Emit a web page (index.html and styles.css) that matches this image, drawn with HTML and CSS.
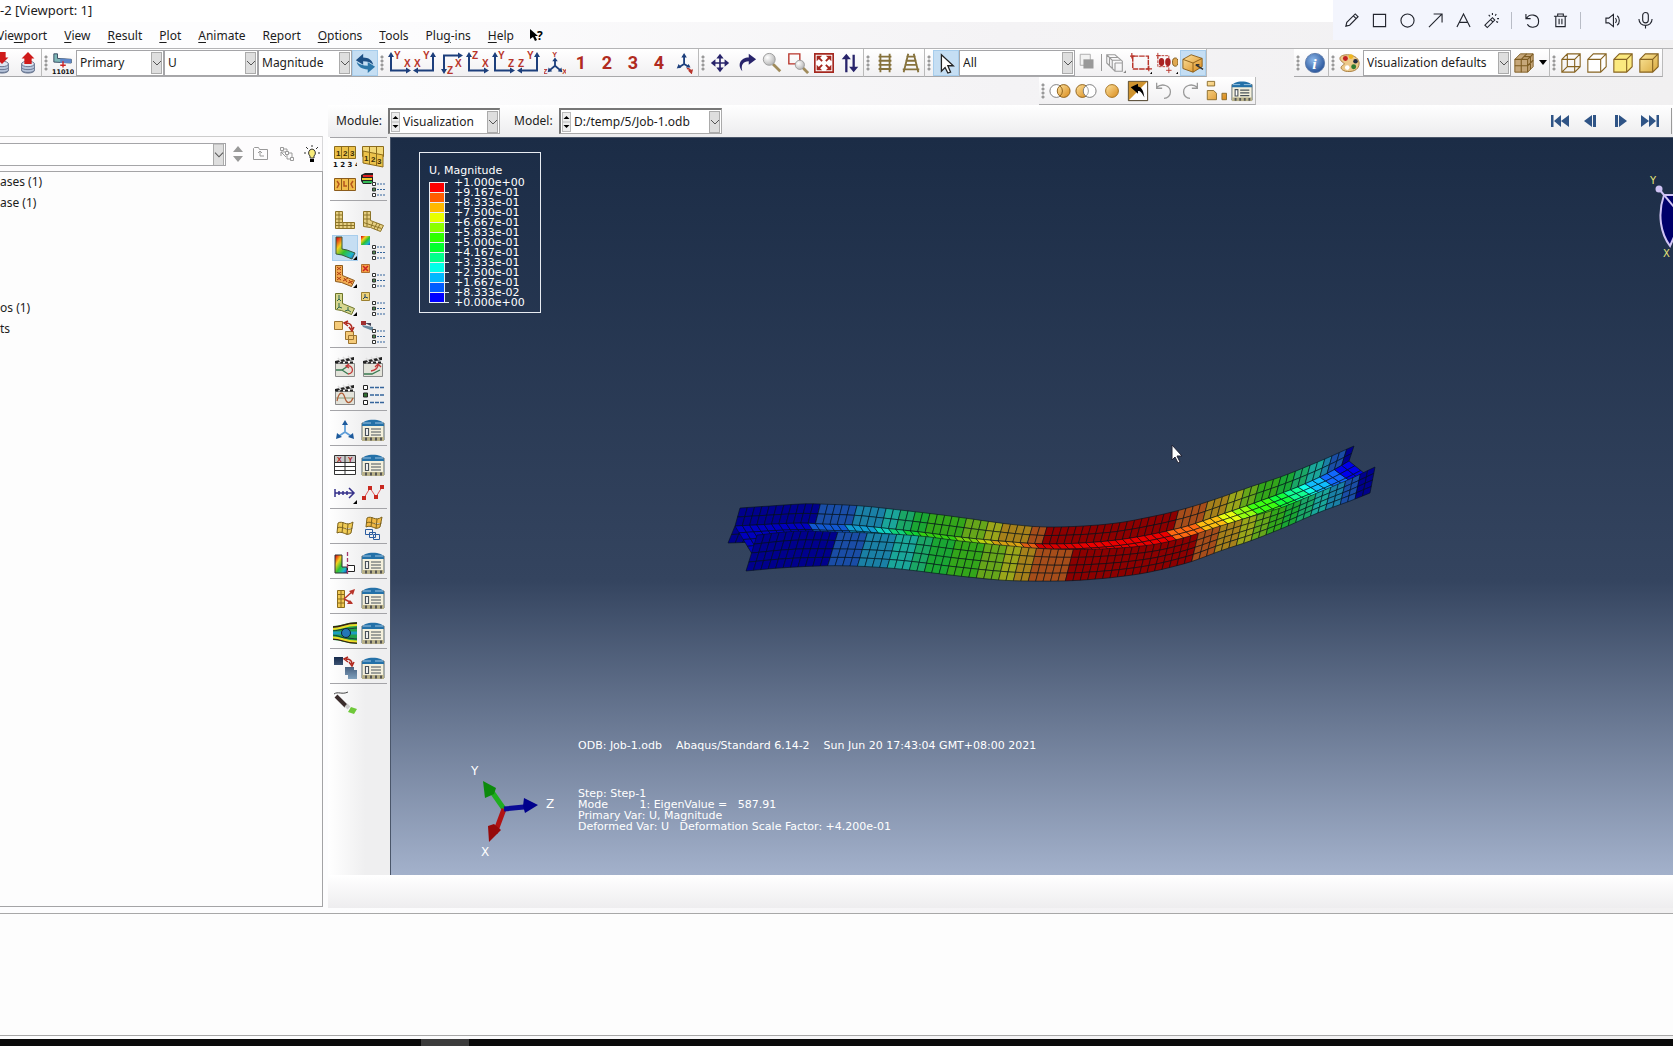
FILE: index.html
```html
<!DOCTYPE html>
<html lang="en">
<head>
<meta charset="utf-8">
<title>Abaqus/CAE 6.14-2 [Viewport: 1]</title>
<link rel="stylesheet" href="styles.css">
</head>
<body>
<svg class="defs" aria-hidden="true">
<defs>
<linearGradient id="gold" x1="0" y1="0" x2="1" y2="1"><stop offset="0" stop-color="#fde3a0"/><stop offset="1" stop-color="#d98a1a"/></linearGradient>
<linearGradient id="sand" x1="0" y1="0" x2="1" y2="1"><stop offset="0" stop-color="#fbe79b"/><stop offset="1" stop-color="#d9a93f"/></linearGradient>
<linearGradient id="rain" x1="0" y1="0" x2="1" y2="1"><stop offset="0.05" stop-color="#e01010"/><stop offset="0.3" stop-color="#f5d020"/><stop offset="0.55" stop-color="#30c030"/><stop offset="0.8" stop-color="#20b8c8"/><stop offset="1" stop-color="#1840d0"/></linearGradient>
<linearGradient id="navy" x1="0" y1="0" x2="0" y2="1"><stop offset="0" stop-color="#16294a"/><stop offset="1" stop-color="#7fa0bd"/></linearGradient>
<radialGradient id="blueball" cx="0.4" cy="0.35" r="0.7"><stop offset="0" stop-color="#8db8ea"/><stop offset="1" stop-color="#234f96"/></radialGradient>
<radialGradient id="lens" cx="0.35" cy="0.35" r="0.7"><stop offset="0" stop-color="#fff"/><stop offset="1" stop-color="#b5b5b5"/></radialGradient>
</defs>
</svg>
<svg class="symbols" aria-hidden="true">
<symbol id="db" viewBox="0 0 24 24"><path d="M5 13v7c0 4 14 4 14 0v-7z" fill="#b9c6dc" stroke="#62718c"/><ellipse cx="12" cy="13" rx="7" ry="3" fill="#dfe6f2" stroke="#62718c"/><path d="M5 17c1 3 13 3 14 0M5 20c1 3 13 3 14 0" fill="none" stroke="#62718c"/></symbol>
<symbol id="db-up" viewBox="0 0 24 24"><use href="#db"/><path d="M12 0l7 7h-3v6h-8v-6h-3z" fill="#cf1b1b"/></symbol>
<symbol id="db-down" viewBox="0 0 24 24"><use href="#db"/><path d="M8 0h8v6h3l-7 7l-7-7h3z" fill="#cf1b1b"/></symbol>
<symbol id="frame" viewBox="0 0 24 24"><path d="M2 2h4v5l15 1v4l-19-1z" fill="#7fb7b7" stroke="#33475e"/><path d="M9 7l12 1v4h-12z" fill="#5d86c8"/><path d="M12 10v7M9 14.500h6" stroke="#c22" stroke-width="1.500"/><text x="0" y="24" class="tiny">11010</text></symbol>
<symbol id="sync" viewBox="0 0 24 24"><path d="M2 9l8-7v4c6 0 10 3 11 8c-3-3-6-4-11-4v4z" fill="#1d4f84"/><path d="M23 16l-8 7v-4c-6 0-11-3-12-8c3 3 7 4 12 4v-4z" fill="#2c76a8"/></symbol>
<symbol id="ax-l" viewBox="0 0 24 24"><path d="M4 4V19.500H21" class="axis"/><path d="M4 1l3 5h-6zM24 19.500l-5-3v6z" class="axh"/></symbol>
<symbol id="ax-r" viewBox="0 0 24 24"><path d="M20 4V19.500H3" class="axis"/><path d="M20 1l3 5h-6zM0 19.500l5-3v6z" class="axh"/></symbol>
<symbol id="ax-d" viewBox="0 0 24 24"><path d="M5 20V4.500H20" class="axis"/><path d="M5 23l3-5h-6zM24 4.500l-5-3v6z" class="axh"/></symbol>
<symbol id="triad" viewBox="0 0 24 24"><path d="M12 8v7l-6 5M12 15l6 5" class="axis"/><path d="M12 6l3 4h-6zM4 22l1-5l4 4zM20 22l-1-5l-4 4z" class="axh"/><text x="9" y="5" class="axt s">Y</text><text x="-1" y="24" class="axt s">Z</text><text x="20" y="24" class="axt s">X</text></symbol>
<symbol id="csys" viewBox="0 0 24 24"><path d="M11 4v9l-6 4M11 13l5 3" class="axis"/><path d="M11 1l3 5h-6zM3 18l2-5l3 4zM18 17l-5 0l3-4z" class="axh"/><path d="M14 18c3 0 4 1 5 4M16 20l3 3l1-4" fill="none" stroke="#b8352b" stroke-width="1.500"/></symbol>
<symbol id="move" viewBox="0 0 24 24"><path d="M12 5v14M5 12h14" stroke="#28246b" stroke-width="1.800"/><path d="M12 2l4 5h-8zM12 22l4-5h-8zM2 12l5-4v8zM22 12l-5-4v8z" fill="#28246b"/></symbol>
<symbol id="rotate" viewBox="0 0 24 24"><path d="M8 21c-6-7-2-15 7-15v-4l8 6l-8 6v-4c-6 0-9 4-7 11z" fill="#28246b"/></symbol>
<symbol id="mag" viewBox="0 0 24 24"><path d="M13 13l8 8" stroke="#a08b5b" stroke-width="3"/><circle cx="9" cy="8" r="6.500" fill="url(#lens)" stroke="#999"/></symbol>
<symbol id="magbox" viewBox="0 0 24 24"><path d="M2 2h12v11h-12z" fill="none" stroke="#b8352b" stroke-width="1.500"/><path d="M17 17l6 6" stroke="#a08b5b" stroke-width="3"/><circle cx="14" cy="14" r="5" fill="url(#lens)" stroke="#999"/></symbol>
<symbol id="fit" viewBox="0 0 24 24"><path d="M2 2h20v20h-20z" fill="#fff" stroke="#a5281f" stroke-width="1.800"/><path d="M10 10l-4-4M14 10l4-4M10 14l-4 4M14 14l4 4" stroke="#a5281f" stroke-width="2"/><path d="M4 4h6l-6 6zM20 4v6l-6-6zM4 20v-6l6 6zM20 20h-6l6-6z" fill="#a5281f"/></symbol>
<symbol id="updown" viewBox="0 0 24 24"><path d="M8 6v16M16 3v15" stroke="#28246b" stroke-width="2.500"/><path d="M8 2l5 6h-10zM16 22l5-6h-10z" fill="#28246b"/></symbol>
<symbol id="ladder" viewBox="0 0 24 24"><path d="M7 2v20M17 2v20M5 5h14M5 9.500h14M5 14h14M5 18.500h14" class="lad"/></symbol>
<symbol id="ladder2" viewBox="0 0 24 24"><path d="M9 2L4 22M15 2l5 20M7 5h10M6 9.500h12M5 14h14M3 19h18" class="lad"/></symbol>
<symbol id="pointer" viewBox="0 0 24 24"><path d="M7 3v18l4-4l3 6l3-1l-3-7h6z" fill="#fff" stroke="#222" stroke-width="1.400"/></symbol>
<symbol id="greysq" viewBox="0 0 24 24"><path d="M3.500 2.500h11v12h-11z" fill="#f2f2f2" stroke="#aaa"/><path d="M7 8h11v10h-11z" fill="#999"/></symbol>
<symbol id="greycubes" viewBox="0 0 24 24"><path d="M3 3h9l8 7v11h-8l-9-9zM3 3l6 6v9M6 6h9M9 9h9M12 12h8M12 12v9M6 6v9M3 8" fill="none" stroke="#9b9b9b" stroke-width="1.200"/><path d="M24 20v3h-3z" fill="#888"/></symbol>
<symbol id="rectsel" viewBox="0 0 24 24"><path d="M3 4.500h17v14h-17z" fill="none" stroke="#b8352b" stroke-width="1.600" stroke-dasharray="6 1"/><path d="M-1 4.500h6M2 1v6M18 18.500h6M20.500 15v6" stroke="#b8352b" stroke-width="1.300"/><path d="M25 20v5h-4z"/></symbol>
<symbol id="dragsel" viewBox="0 0 24 24"><path d="M2 4h12v12h-12z" fill="none" stroke="#b8352b" stroke-dasharray="3 1"/><path d="M-1 4h6M2 1v6M11 20h6M14 17v6" stroke="#b8352b"/><ellipse cx="6" cy="11" rx="3" ry="4.500" fill="#a22"/><ellipse cx="13" cy="11" rx="3" ry="4.500" fill="#a22"/><ellipse cx="21" cy="11" rx="3" ry="4.500" fill="#e0a850" stroke="#7a5518"/><path d="M25 20v5h-4z"/></symbol>
<symbol id="box3d" viewBox="0 0 24 24"><path d="M1 8l9-5l12 4v9l-10 6l-11-4z" fill="url(#gold)" stroke="#8a5c16"/><path d="M1 8l11 4l10-5M12 12v10" fill="none" stroke="#8a5c16"/><path d="M15 14l8 5M15 14l4 0" stroke="#333" stroke-width="1.600"/></symbol>
<symbol id="union" viewBox="0 0 24 24"><circle cx="8" cy="12" r="7" fill="#fff" stroke="#777"/><circle cx="16" cy="12" r="7" fill="url(#gold)" stroke="#8a5c16"/><path d="M12 6.500a7 7 0 0 1 0 11" fill="none" stroke="#8a5c16"/></symbol>
<symbol id="diff" viewBox="0 0 24 24"><circle cx="8" cy="12" r="7" fill="url(#gold)" stroke="#8a5c16"/><circle cx="16" cy="12" r="7" fill="#fff" stroke="#777"/><path d="M12 6.500a7 7 0 0 1 0 11" fill="none" stroke="#999"/></symbol>
<symbol id="ball" viewBox="0 0 24 24"><circle cx="12" cy="12" r="7" fill="url(#gold)" stroke="#a06c1a"/></symbol>
<symbol id="invert" viewBox="0 0 24 24"><path d="M1.500 1.500h21v21h-21z" fill="#fff" stroke="#3b2c12"/><path d="M2 22V2h20z" fill="#cf942f"/><path d="M4 8l8-4v3c5 1 6 6 7 12c-3-5-4-7-7-7v3z"/></symbol>
<symbol id="undo" viewBox="0 0 24 24"><path d="M4 8c6-5 15-2 15 5c0 4-3 7-7 7M4 3v6h6" fill="none" stroke="#999" stroke-width="1.400"/></symbol>
<symbol id="redo" viewBox="0 0 24 24"><path d="M20 8c-6-5-15-2-15 5c0 4 3 7 7 7M20 3v6h-6" fill="none" stroke="#999" stroke-width="1.400"/></symbol>
<symbol id="shapes" viewBox="0 0 24 24"><path d="M2.500 1.500h8v5h-8zM2.500 11.500h7l3 3v7h-10zM18.500 14.500h5v7h-5z" fill="url(#gold)" stroke="#8a6a2a"/></symbol>
<symbol id="table" viewBox="0 0 24 24"><path d="M1 5h22v17h-22z" fill="#f4f0dc" stroke="#5d6a6e"/><path d="M1 7c0-7 22-7 22 0v1h-22z" fill="#2471a8"/><path d="M2 5h8M14 5h8" stroke="#9cc4e2"/><path d="M4.500 10.500h3v7h-3zM10 11h10M10 14h10M10 17h10" stroke="#49525a" stroke-width="1.200" fill="#fff"/><path d="M1 19h22v4h-22z" fill="#b9b28a"/><path d="M5 19.500v3M10 19.500v3M15 19.500v3M20 19.500v3" stroke="#555" stroke-width="2"/></symbol>
<symbol id="info" viewBox="0 0 24 24"><circle cx="12" cy="12" r="10.500" fill="url(#blueball)" stroke="#5c7aa8"/><text x="9" y="18" class="infot">i</text></symbol>
<symbol id="palette" viewBox="0 0 24 24"><path d="M1 7c0-6 20-6 21 5c0 9-9 10-15 9c-6-2-6-5-2-7c3-2-4-3-4-7z" fill="#ecc98a" stroke="#a5793a"/><circle cx="7" cy="7" r="2.700" fill="#c22020"/><circle cx="13" cy="5" r="2.500" fill="#f0b820"/><circle cx="18" cy="10" r="2.500" fill="#202a40"/><circle cx="16" cy="16" r="2.700" fill="#2f7a30"/><circle cx="9" cy="17" r="2.500" fill="#fff"/></symbol>
<symbol id="cube-mesh" viewBox="0 0 24 24"><path d="M2 8l6-6h14v14l-6 6h-14z" fill="#c6a77a" stroke="#7d5c22"/><path d="M2 8h14v14M16 8l6-6M9 8v14M2 15h14M12 5h8M15 2l-6 6M16 15l6-6M19 5v14" fill="none" stroke="#7d5c22" stroke-width="1.200"/></symbol>
<symbol id="cube-wire" viewBox="0 0 24 24"><path d="M2 8l6-6h14v14l-6 6h-14zM2 8h14v14M16 8l6-6M8 2v14h14M8 16l-6 6" fill="none" stroke="#866321" stroke-width="1.200"/></symbol>
<symbol id="cube-hid" viewBox="0 0 24 24"><path d="M2 8l6-6h14v14l-6 6h-14zM2 8h14v14M16 8l6-6" fill="#fff" stroke="#866321" stroke-width="1.200"/></symbol>
<symbol id="cube-fill" viewBox="0 0 24 24"><path d="M2 8l6-6h14v14l-6 6h-14zM2 8h14v14M16 8l6-6" fill="#fbe97f" stroke="#866321" stroke-width="1.200"/></symbol>
<symbol id="cube-shade" viewBox="0 0 24 24"><path d="M2 8l6-6h14v14l-6 6h-14zM2 8h14v14M16 8l6-6" fill="url(#sand)" stroke="#866321" stroke-width="1.200"/></symbol>

<symbol id="opts" viewBox="0 0 24 24"><path d="M11.500 9.500h3v3h-3zM11.500 20.500h3v3h-3z" fill="#fff" stroke="#333"/><path d="M11.500 15h3v3h-3z" fill="#4f8a4f" stroke="#333"/><path d="M16 11h8M16 16.500h8M16 22h8" stroke="#35659c" stroke-width="1.200" stroke-dasharray="2 1"/></symbol>
<symbol id="num" viewBox="0 0 24 24"><path d="M1.500 1.500h21v12h-21zM8.500 1.500v12M15.500 1.500v12" fill="#ecc24a" stroke="#8c6c1c"/><text x="3" y="11" class="numt">1</text><text x="10" y="11" class="numt">2</text><text x="17" y="11" class="numt">3</text><text x="0" y="22" class="tiny">1 2 3 4</text></symbol>
<symbol id="num2" viewBox="0 0 24 24"><path d="M1.500 1.500h21v10h-21zM8.500 1.500v10M15.500 1.500v10" fill="#f2d878" stroke="#8c6c1c"/><path d="M2 6l20 4v12l-20-4z" fill="#ecc24a" stroke="#8c6c1c"/><path d="M8.500 7v12M15.500 9v12" stroke="#8c6c1c"/><text x="3" y="16" class="numt">1</text><text x="10" y="17" class="numt">2</text><text x="16" y="19" class="numt">3</text></symbol>
<symbol id="cs" viewBox="0 0 24 24"><path d="M1.500 5.500h21v12h-21zM8.500 5.500v12M15.500 5.500v12" fill="#f0bc4a" stroke="#8c5c1c"/><path d="M4 8l2 3l-2 4M11 8v5h3M20 8l-2 3l2 4" fill="none" stroke="#b5541c" stroke-width="1.500"/></symbol>
<symbol id="stack" viewBox="0 0 24 24"><path d="M0 2l4-2h8v9l-2 2h-8l-2-3z" fill="#222"/><path d="M2 3h10" stroke="#d22" stroke-width="2"/><path d="M1 6h10" stroke="#ec3" stroke-width="2"/><path d="M2 9h9" stroke="#3b5" stroke-width="2"/><use href="#opts"/></symbol>
<symbol id="mesh-l" viewBox="0 0 24 24"><path d="M2.500 3.500h7v11h12v6h-19zM6 3.500v17M2.500 7h7M2.500 11h7M2.500 14.500h7M2.500 17.500h19M10 14.500v6M14 14.500v6M18 14.500v6" fill="#e6cf82" stroke="#8c7428"/></symbol>
<symbol id="mesh-b" viewBox="0 0 24 24"><path d="M2.500 3.500h7v9l13 5l-3 6l-10-4l-7-1zM6 3.500v15M2.500 7h7M2.500 11h7M2.500 14.500l18 6M12 14l-2 5M16 15l-3 6M19 16l-3 6" fill="#e6cf82" stroke="#8c7428"/></symbol>
<symbol id="cont-l" viewBox="0 0 24 24"><path d="M3 1h6v12l5 1l8 3l-3 6l-10-4l-6-1z" fill="url(#rain)" stroke="#3a5a3a"/><path d="M25 19v5h-5z"/></symbol>
<symbol id="cont-o" viewBox="0 0 24 24"><path d="M0 0h9v9h-9z" fill="url(#rain)"/><use href="#opts"/></symbol>
<symbol id="x-l" viewBox="0 0 24 24"><path d="M2.500 1.500h7v10l12 5l-3 6l-10-4l-6-1z" fill="#f2ae54" stroke="#8c5a1c"/><path d="M4 3l4 3M8 3l-4 3M4 8l4 3M8 8l-4 3M4 13l4 3M8 13l-4 3M11 14l3 4M15 14l-5 3M16 16l3 4M20 17l-5 2" stroke="#b03a10"/><path d="M24 20v4h-4z"/></symbol>
<symbol id="x-o" viewBox="0 0 24 24"><path d="M.5.5h8v8h-8z" fill="#f2a044" stroke="#b07030"/><path d="M2 2l5 5M7 2l-5 5" stroke="#c22" stroke-width="1.500"/><use href="#opts"/></symbol>
<symbol id="a-l" viewBox="0 0 24 24"><path d="M2.500 1.500h7v10l12 5l-3 6l-10-4l-6-1z" fill="#d6d68e" stroke="#6c7428"/><path d="M6 3v4l-2 2M6 7l2 2M6 11v4l-2 2M6 15l3 1M15 15v3l-3 1M15 18l3 2" stroke="#306a50" fill="none"/><path d="M24 20v4h-4z"/></symbol>
<symbol id="a-o" viewBox="0 0 24 24"><path d="M.5.5h8v8h-8z" fill="#ecd27a" stroke="#9c8030"/><path d="M4 2v3l-2 2M4 5l3 1" stroke="#246" fill="none"/><use href="#opts"/></symbol>
<symbol id="swap" viewBox="0 0 24 24"><path d="M1.500 1.500h8v8h-8zM12.500 11.500h8v8h-8zM15.500 15.500h8v8h-8z" fill="#f5cb7a" stroke="#9c7430"/><path d="M13 3c4 0 6 2 6 6M15 1l-4 2l4 3M16 7l3 4l2-4" fill="none" stroke="#b02a20" stroke-width="1.500"/></symbol>
<symbol id="swap-o" viewBox="0 0 24 24"><path d="M0 1h5v4h-5z" fill="#a23030"/><path d="M1 5l11 2v4l-10-4z" fill="#6a8ba0"/><path d="M4 3l6 3v-3z" fill="#445"/><use href="#opts"/></symbol>
<symbol id="film" viewBox="0 0 24 24"><path d="M2.500 8.500h19v13h-19z" fill="#e3e3da" stroke="#888"/><path d="M2 6l19-4v3l-19 3z" fill="#222"/><path d="M2 7.500h20" stroke="#222" stroke-width="2" stroke-dasharray="3 2"/><path d="M5 3l3 4M10 2l3 4M15 1l3 4" stroke="#ddd" stroke-width="1.500"/></symbol>
<symbol id="film1" viewBox="0 0 24 24"><use href="#film"/><path d="M3 15h6l6-4M9 15l6 4" stroke="#397a52" fill="none" stroke-width="1.300"/><path d="M14 11c6-2 8 8 1 8M16 9l-3 2l3 2" stroke="#c23a3a" fill="none" stroke-width="1.300"/></symbol>
<symbol id="film2" viewBox="0 0 24 24"><use href="#film"/><path d="M3 19h8l8-4" stroke="#397a52" fill="none" stroke-width="1.300"/><path d="M10 16c5-1 7-3 7-6M14 12l3-3l3 3" stroke="#c23a3a" fill="none" stroke-width="1.300"/></symbol>
<symbol id="film3" viewBox="0 0 24 24"><use href="#film"/><path d="M3 15h18" stroke="#8a9a7a"/><path d="M4 18c2-10 6-10 8-3s6 5 8 0" stroke="#b0603a" fill="none" stroke-width="1.300"/></symbol>
<symbol id="list" viewBox="0 0 24 24"><path d="M2.500 2.500h4v4h-4zM2.500 17.500h4v4h-4z" fill="#fff" stroke="#222"/><path d="M2.500 10h4v4h-4z" fill="#2f7030" stroke="#222"/><path d="M9 4.500h14M9 12h14M9 19.500h14" stroke="#35659c" stroke-width="1.500" stroke-dasharray="4 1"/></symbol>
<symbol id="triad-b" viewBox="0 0 24 24"><path d="M12 6v8l-6 4M12 14l6 4" stroke="#5f9ed8" stroke-width="1.700" fill="none"/><path d="M12 2l3 5h-6zM3 21l1-6l5 4zM21 21l-1-6l-5 4z" fill="#1d5a9c"/></symbol>
<symbol id="xy" viewBox="0 0 24 24"><path d="M1.500 2.500h21v19h-21z" fill="#fff" stroke="#333"/><path d="M2 3h20v6h-20z" fill="#c9c9c9"/><path d="M1.500 9.500h21M1.500 13.500h21M1.500 17.500h21M12 2.500v19" stroke="#333"/><text x="4" y="9" class="xyt">X</text><text x="15" y="9" class="xyt">Y</text></symbol>
<symbol id="path" viewBox="0 0 24 24"><path d="M2 8v8M2 12h19M6 10v4M10 10v4M14 10v4M16 7l5 5l-5 5" stroke="#35308a" stroke-width="1.500" fill="none"/><path d="M24 19v4h-4z"/></symbol>
<symbol id="zig" viewBox="0 0 24 24"><path d="M3 17l6-10l6 9l6-10" stroke="#e05a5a" fill="none"/><path d="M1 15h4v4h-4zM7 5h4v4h-4zM13 14h4v4h-4zM19 4h4v4h-4z" fill="#c8281f"/></symbol>
<symbol id="wave" viewBox="0 0 24 24"><path d="M5 7c5-3 8 4 15-1l-2 11c-5 4-8-3-14 0zM4.500 12c5-3 9 4 15 0M10 6l-1 11M15 8l-1 11" fill="#f0cb55" stroke="#7c621c"/></symbol>
<symbol id="waves" viewBox="0 0 24 24"><path d="M6 2c5-3 8 4 15-1l-2 10c-5 4-8-3-14 0zM5.500 7c5-3 9 4 15 0M11 1l-1 10M16 3l-1 10" fill="#f0b845" stroke="#7c621c"/><path d="M4.500 13.500h7v5h-7zM8.500 16.500h6v5h-6zM12.500 18.500h6v5h-6z" fill="none" stroke="#2a5ca0"/></symbol>
<symbol id="cut" viewBox="0 0 24 24"><path d="M2 4h7v12h5v6h-12z" fill="url(#rain)" stroke="#333"/><path d="M14.500 14.500h7v6h-7z" fill="#fff" stroke="#222"/><path d="M14.500 1v22" stroke="#a33a6a" stroke-dasharray="4 2" stroke-width="1.300"/></symbol>
<symbol id="free" viewBox="0 0 24 24"><path d="M4.500 4.500h7v17h-7zM8 4.500v17M4.500 8.500h7M4.500 13h7M4.500 17h7" fill="#f2ca55" stroke="#8c6c1c"/><path d="M11 13l9-8M11 13l8 4" stroke="#b8352b" stroke-width="1.500"/><path d="M22 3l-2 6l-4-4zM20 18l-6 0l3-4z" fill="#b8352b"/></symbol>
<symbol id="stream" viewBox="0 0 24 24"><path d="M0 5c8 0 10-3 24-4v22c-14-1-16-4-24-4z" fill="#23a04a"/><path d="M0 6c10 0 11-4 24-4M0 18c10 0 11 4 24 4" stroke="#3c1c10" fill="none" stroke-width="1.500"/><path d="M0 8c10 0 10-4 24-4M0 16.500c10 0 10 4 24 4" stroke="#ecdc28" fill="none" stroke-width="2"/><path d="M0 10c7-1 9-2 13-2s8-1 11-1M0 14c7 1 9 3 13 3s8 1 11 1" stroke="#123" fill="none" stroke-width=".8"/><path d="M0 12h24" stroke="#1c9cc0" stroke-width="3"/><circle cx="13" cy="12" r="4.500" fill="#2277b8" stroke="#123"/></symbol>
<symbol id="over" viewBox="0 0 24 24"><path d="M1 1h9v8h-9zM12 11h9v8h-9zM15 14h9v9h-9z" fill="url(#navy)"/><path d="M13 3c4 0 6 2 6 5M15 1l-4 2l4 3M16 6l3 4l2-4" fill="none" stroke="#b02a20" stroke-width="1.500"/></symbol>
<symbol id="brush" viewBox="0 0 24 24"><path d="M1 3c4-3 8 1 14-2" stroke="#444" fill="none"/><path d="M3 5l10 10" stroke="#3a2c2c" stroke-width="4"/><path d="M13 14l3 3" stroke="#ccc" stroke-width="4"/><path d="M15 21l3-5l6 2l-3 5z" fill="#6fc83a"/></symbol>
</svg>

<header class="title">-2 [Viewport: 1]</header>
<nav class="menu">
  <a href="#"><span>Vie<u>w</u>port</span></a><a href="#"><u>V</u>iew</a><a href="#"><u>R</u>esult</a><a href="#"><u>P</u>lot</a><a href="#"><u>A</u>nimate</a><a href="#">R<u>e</u>port</a><a href="#"><u>O</u>ptions</a><a href="#"><u>T</u>ools</a><a href="#">Plu<u>g</u>-ins</a><a href="#"><u>H</u>elp</a>
  <button class="whats" aria-label="What's this"><svg width="15" height="14" viewBox="0 0 15 14"><path d="M1 0v10l3-2l2 4l2-1l-2-4h3z"/><text x="8" y="11" class="q">?</text></svg></button>
</nav>

<div class="bar" role="toolbar">
  <div class="grp first"><button><svg><use href="#db-down"/></svg></button><button><svg><use href="#db-up"/></svg></button></div>
  <div class="grp open"><i class="grip"></i><button><svg><use href="#frame"/></svg></button>
    <select class="w88" aria-label="Variable type"><option>Primary</option></select><select class="w94" aria-label="Variable"><option>U</option></select><select class="w94" aria-label="Invariant"><option>Magnitude</option></select><button class="on"><svg><use href="#sync"/></svg></button></div>
  <div class="grp"><i class="grip"></i>
    <button><svg><use href="#ax-l"/><text x="7" y="8" class="axt">Y</text><text x="17" y="16" class="axt">X</text></svg></button>
    <button><svg><use href="#ax-r"/><text x="10" y="8" class="axt">Y</text><text x="1" y="16" class="axt">X</text></svg></button>
    <button><svg><use href="#ax-d"/><text x="16" y="16" class="axt">X</text><text x="8" y="23" class="axt">Z</text></svg></button>
    <button><svg><use href="#ax-l"/><text x="7" y="8" class="axt">Z</text><text x="17" y="16" class="axt">X</text></svg></button>
    <button><svg><use href="#ax-l"/><text x="7" y="8" class="axt">Y</text><text x="17" y="16" class="axt">Z</text></svg></button>
    <button><svg><use href="#ax-r"/><text x="10" y="8" class="axt">Y</text><text x="1" y="16" class="axt">Z</text></svg></button>
    <button><svg><use href="#triad"/></svg></button>
    <button class="n">1</button><button class="n">2</button><button class="n">3</button><button class="n">4</button>
    <button><svg><use href="#csys"/></svg></button></div>
  <div class="grp"><i class="grip"></i><button><svg><use href="#move"/></svg></button><button><svg><use href="#rotate"/></svg></button><button><svg><use href="#mag"/></svg></button><button><svg><use href="#magbox"/></svg></button><button><svg><use href="#fit"/></svg></button><button><svg><use href="#updown"/></svg></button></div>
  <div class="grp"><i class="grip"></i><button><svg><use href="#ladder"/></svg></button><button><svg><use href="#ladder2"/></svg></button></div>
  <div class="grp"><i class="grip"></i><button class="on"><svg><use href="#pointer"/></svg></button><select class="w116" aria-label="Selection filter"><option>All</option></select><button><svg><use href="#greysq"/></svg></button><i class="vsep"></i><button><svg><use href="#greycubes"/></svg></button><button><svg><use href="#rectsel"/></svg></button><button><svg><use href="#dragsel"/></svg></button><button class="on"><svg><use href="#box3d"/></svg></button></div>
  <div class="grp push"><i class="grip"></i><button><svg><use href="#info"/></svg></button></div>
  <div class="grp"><i class="grip"></i><button><svg><use href="#palette"/></svg></button><select class="w148" aria-label="Color coding"><option>Visualization defaults</option></select><button><svg><use href="#cube-mesh"/></svg></button><button class="drop" aria-label="More"></button></div>
  <div class="grp"><i class="grip"></i><button><svg><use href="#cube-wire"/></svg></button><button><svg><use href="#cube-hid"/></svg></button><button><svg><use href="#cube-fill"/></svg></button><button><svg><use href="#cube-shade"/></svg></button></div>
</div>
<div class="bar2" role="toolbar">
  <div class="grp"><i class="grip"></i><button><svg><use href="#union"/></svg></button><button><svg><use href="#diff"/></svg></button><button><svg><use href="#ball"/></svg></button><button><svg><use href="#invert"/></svg></button><button><svg><use href="#undo"/></svg></button><button><svg><use href="#redo"/></svg></button><button><svg><use href="#shapes"/></svg></button><button><svg><use href="#table"/></svg></button></div>
</div>

<main class="main">
  <aside class="side">
    <div class="find">
      <select aria-label="Tree filter"><option></option></select>
      <div class="findicons">
      <svg width="12" height="18" viewBox="0 0 12 18"><path d="M6 1l5 6h-10zM6 17l5-6h-10z" fill="#999"/></svg>
      <svg width="16" height="16" viewBox="0 0 16 16"><path d="M.5 13.500v-11l1-1h4l1 2h8v10zM5 7l2-2l2 2M7 5v5h4" fill="none" stroke="#999"/></svg>
      <svg width="16" height="16" viewBox="0 0 16 16"><path d="M1.500 1.500h3v3h-3zM6.500 5.500h3v3h-3zM11.500 11.500h3v3h-3zM7 11l-5-5M2 10v-4h4M4 3h4v2M10 7h3v4M8 9v4h3" fill="none" stroke="#999"/></svg>
      <svg width="16" height="18" viewBox="0 0 16 18"><path d="M8 4a4 4 0 0 1 2 7v2h-4v-2a4 4 0 0 1 2-7z" fill="#f8ec7a" stroke="#333"/><path d="M6 14h4v3h-4z"/><path d="M8 0v2M2 2l2 2M14 2l-2 2M0 8h2M14 8h2" stroke="#333"/></svg>
      </div>
    </div>
    <ul class="tree"><li>ases (1)</li><li>ase (1)</li><li></li><li></li><li></li><li></li><li>os (1)</li><li>ts</li></ul>
  </aside>
  <section class="work">
    <div class="module">
      <label for="mod">Module:</label><span class="combo"><i class="spin"></i><select id="mod" class="w99"><option>Visualization</option></select></span>
      <label for="mdl" class="second">Model:</label><span class="combo"><i class="spin dim"></i><select id="mdl" class="w150"><option>D:/temp/5/Job-1.odb</option></select></span>
      <div class="play">
        <button aria-label="First"><svg width="18" height="12" viewBox="0 0 18 12"><path d="M0 0h2.500v12H0zM10 0v12l-7-6zM18 0v12l-8-6z"/></svg></button>
        <button aria-label="Previous"><svg width="18" height="12" viewBox="0 0 18 12"><path d="M11 0v12l-8-6zM12 0h3v12h-3z"/></svg></button>
        <button aria-label="Next"><svg width="18" height="12" viewBox="0 0 18 12"><path d="M4 0h3v12h-3zM8 0v12l8-6z"/></svg></button>
        <button aria-label="Last"><svg width="18" height="12" viewBox="0 0 18 12"><path d="M0 0v12l8-6zM8 0v12l7-6zM15.500 0h2.500v12h-2.500z"/></svg></button>
      </div>
    </div>
    <div class="stage">
      <div class="tools">
        <div><button><svg><use href="#num"/></svg></button><button><svg><use href="#num2"/></svg></button><button><svg><use href="#cs"/></svg></button><button><svg><use href="#stack"/></svg></button></div>
        <div><button><svg><use href="#mesh-l"/></svg></button><button><svg><use href="#mesh-b"/></svg></button><button class="on"><svg><use href="#cont-l"/></svg></button><button><svg><use href="#cont-o"/></svg></button><button><svg><use href="#x-l"/></svg></button><button><svg><use href="#x-o"/></svg></button><button><svg><use href="#a-l"/></svg></button><button><svg><use href="#a-o"/></svg></button><button><svg><use href="#swap"/></svg></button><button><svg><use href="#swap-o"/></svg></button></div>
        <div><button><svg><use href="#film1"/></svg></button><button><svg><use href="#film2"/></svg></button><button><svg><use href="#film3"/></svg></button><button><svg><use href="#list"/></svg></button></div>
        <div><button><svg><use href="#triad-b"/></svg></button><button><svg><use href="#table"/></svg></button></div>
        <div><button><svg><use href="#xy"/></svg></button><button><svg><use href="#table"/></svg></button><button><svg><use href="#path"/></svg></button><button><svg><use href="#zig"/></svg></button></div>
        <div><button><svg><use href="#wave"/></svg></button><button><svg><use href="#waves"/></svg></button></div>
        <div><button><svg><use href="#cut"/></svg></button><button><svg><use href="#table"/></svg></button></div>
        <div><button><svg><use href="#free"/></svg></button><button><svg><use href="#table"/></svg></button></div>
        <div><button><svg><use href="#stream"/></svg></button><button><svg><use href="#table"/></svg></button></div>
        <div><button><svg><use href="#over"/></svg></button><button><svg><use href="#table"/></svg></button></div>
        <div><button><svg><use href="#brush"/></svg></button></div>
      </div>
      <div class="viewport">
        <div class="legend"><div class="lt">U, Magnitude</div>
          <div class="lb"><div class="sw"><i class="c1"></i><i class="c2"></i><i class="c3"></i><i class="c4"></i><i class="c5"></i><i class="c6"></i><i class="c7"></i><i class="c8"></i><i class="c9"></i><i class="c10"></i><i class="c11"></i><i class="c12"></i></div>
          <ol><li>+1.000e+00</li><li>+9.167e-01</li><li>+8.333e-01</li><li>+7.500e-01</li><li>+6.667e-01</li><li>+5.833e-01</li><li>+5.000e-01</li><li>+4.167e-01</li><li>+3.333e-01</li><li>+2.500e-01</li><li>+1.667e-01</li><li>+8.333e-02</li><li>+0.000e+00</li></ol></div>
        </div>
        <svg id="beam" class="beam" width="680" height="170" viewBox="720 430 680 170"></svg>
        <svg class="mouse" width="14" height="20" viewBox="0 0 14 20"><path d="M1 1v15l3-3l3 6l2-1l-3-6h5z" fill="#fff" stroke="#223"/></svg>
        <svg class="compass" width="24" height="90" viewBox="1649 170 24 90"><path d="M1664 195h10v42l-4 9c-9-12-13-31-6-51z" fill="#00006a" stroke="#cfc3f4" stroke-width="2"/><path d="M1659 189l15 18" stroke="#cfc3f4" stroke-width="2"/><circle cx="1659" cy="189" r="3.500" fill="#cfc3f4"/><text x="1650" y="184" class="ct">Y</text><text x="1663" y="257" class="ct">X</text></svg>
        <svg class="axes" width="90" height="100" viewBox="466 760 90 100"><path d="M504 808L490 788" stroke="#1fae1f" stroke-width="5"/><path d="M483 780l13 7l-2 6l-9 4z" fill="#0c8a0c"/><path d="M504 808l-9 24" stroke="#b01212" stroke-width="5"/><path d="M489 841l-1-16l6-2l7 6z" fill="#960a0a"/><path d="M504 808l20-2" stroke="#0a0a96" stroke-width="5"/><path d="M538 804l-13 8l-2-7l1-8z" fill="#00008c"/><text x="471" y="774" class="at">Y</text><text x="546" y="807" class="at">Z</text><text x="481" y="855" class="at">X</text></svg>
        <div class="info"><p>ODB: Job-1.odb    Abaqus/Standard 6.14-2    Sun Jun 20 17:43:04 GMT+08:00 2021</p>
<p class="gap">Step: Step-1</p><p>Mode         1: EigenValue =   587.91</p><p>Primary Var: U, Magnitude</p><p>Deformed Var: U   Deformation Scale Factor: +4.200e-01</p></div>
      </div>
    </div>
    <div class="strip"></div>
  </section>
</main>
<div class="messages"></div>
<footer class="taskbar"><i></i></footer>

<div class="float" role="toolbar">
  <button><svg viewBox="0 0 16 16"><path d="M2 14l1-4l9-9l3 3l-9 9zM10 3l3 3"/></svg></button>
  <button><svg viewBox="0 0 16 16"><path d="M1.500 1.500h13v13h-13z"/></svg></button>
  <button><svg viewBox="0 0 16 16"><circle cx="8" cy="8" r="7"/></svg></button>
  <button><svg viewBox="0 0 16 16"><path d="M1 15L15 1M6 1h9v9"/></svg></button>
  <button><svg viewBox="0 0 16 16"><path d="M1 15L8 1l7 14M4 10h8"/></svg></button>
  <button><svg viewBox="0 0 16 16"><path d="M1 13l8-8l2.500 2.500l-8 8zM7 7l2.500 2.500M9 0v2M13 1l-1 2M16 6h-2M15 10l-2-1M5 2l1.500 1.500"/></svg></button>
  <i></i>
  <button><svg viewBox="0 0 16 16"><path d="M1 1v5h5M1.500 6c3-6 13-5 13 3c0 7-9 8-12 3"/></svg></button>
  <button><svg viewBox="0 0 16 16"><path d="M1 3.500h14M5 3V1h6v2M3 3.500v11h10v-11M6.500 6v6M9.500 6v6"/></svg></button>
  <i></i>
  <button class="sp"><svg viewBox="0 0 16 16"><path d="M1 5.500v5h3l5 4v-13l-5 4zM11 5.500c1.500 1 1.500 4 0 5M13 3c3 2 3 8 0 10"/></svg></button>
  <button class="mic"><svg viewBox="0 0 16 18"><path d="M8 1a3 3 0 0 1 3 3v5a3 3 0 0 1-6 0v-5a3 3 0 0 1 3-3zM1 8c0 9 14 9 14 0M8 15v3"/></svg></button>
</div>
<script src="beam.js"></script>
</body>
</html>
```

FILE: styles.css
```css
* { box-sizing: border-box; }
html, body { height: 100%; }
body {
  margin: 0; display: flex; flex-direction: column; min-height: 100vh; overflow: hidden;
  font: 12px/16px "Noto Sans", "Open Sans", sans-serif; color: #1c1c1c;
  background: linear-gradient(90deg, #fdfdfe 20%, #f4f3f5 60%, #f1f0f1);
  position: relative;
}
.defs { position: absolute; width: 0; height: 0; }
.symbols { display: none; }
button { border: 0; padding: 0; background: none; font: inherit; color: inherit; display: flex; align-items: center; justify-content: center; }
a { color: inherit; text-decoration: none; }
u { text-underline-offset: 2px; }
.title { height: 22px; line-height: 20px; font-size: 13px; background: #fff; flex: none; }
.menu { height: 26px; flex: none; display: flex; align-items: center; gap: 17px; overflow: hidden; margin-left: -3px; padding-top: 2px; }
.whats { width: 15px; margin-left: -2px; }
.q { font: bold 12px "Noto Sans", sans-serif; }

.bar { display: flex; height: 29px; flex: none; border-top: 1px solid #b4b4b6; overflow: hidden; padding-right: 10px; }
.bar2 { display: flex; height: 28px; flex: none; padding-left: 1039px; }
.grp { display: flex; align-items: center; flex: none; height: 28px; border-right: 1px solid #bbb; border-bottom: 1px solid #a8a8aa; background: linear-gradient(#fff, #f1f0f2); }
.grp.first { margin-left: -11px; }
.grp.open { border-right: 0; }
.push { margin-left: auto; }
.grp button { width: 26px; height: 26px; flex: none; }
.grp svg { width: 22px; height: 22px; overflow: visible; }
.grp button svg:has(text) { width: 24px; height: 24px; }
.grp .n { font: bold 18px Roboto, sans-serif; color: #b02a20; }
.grp .drop { width: 12px; }
.drop::before { content: ""; border: 4px solid transparent; border-top: 5px solid #000; border-bottom: 0; }
.on { background: #c5def3; box-shadow: inset 0 0 0 1px #a7cdec; }
.grip { width: 8px; height: 16px; flex: none; background: radial-gradient(circle, #999 1px, transparent 2px) center top / 4px 4px repeat-y; }
.vsep { width: 1px; height: 17px; background: #999; }

select {
  appearance: none; height: 26px; flex: none; border: 1px solid #a5a5a8; border-radius: 0; padding: 0 14px 0 3px;
  font: inherit; color: inherit; margin: 0; outline: 0;
  background: #fff url("data:image/svg+xml,%3Csvg xmlns='http://www.w3.org/2000/svg' width='12' height='22'%3E%3Crect x='.5' y='.5' width='10' height='21' fill='%23dedede' stroke='%23ababab'/%3E%3Cpath d='M2 9l4 4l4-4' fill='none' stroke='%23555'/%3E%3C/svg%3E") no-repeat right center;
}
.w88 { width: 88px; } .w94 { width: 94px; } .w116 { width: 116px; } .w148 { width: 148px; } .w99 { width: 99px; } .w150 { width: 150px; }
.tiny { font: bold 7px "DejaVu Sans", sans-serif; fill: #111; }
.axis { fill: none; stroke: #1d3f7c; stroke-width: 2; }
.axh { fill: #1d3f7c; }
.axt { font: bold 10px "Liberation Sans", sans-serif; fill: #b8352b; }
.axt.s { font-size: 8px; }
.lad { fill: none; stroke: #86723c; stroke-width: 2; }
.infot { font: italic bold 17px "Liberation Serif", serif; fill: #fff; }
.numt { font: bold 8px "Liberation Sans", sans-serif; fill: #3a2c08; }
.xyt { font: bold 7px "Liberation Sans", sans-serif; fill: #b02020; }

.main { flex: 1; display: flex; min-height: 0; }
.side { width: 323px; flex: none; margin: 31px 5px 6px 0; display: flex; flex-direction: column; border-top: 1px solid #ccc; border-right: 1px solid #d8d8da; background: #fdfcfd; }
.find { height: 34px; flex: none; display: flex; align-items: center; padding-right: 2px; }
.find select { width: 226px; height: 23px; border-left: 0; }
.findicons { flex: 1; display: flex; align-items: center; justify-content: space-between; padding-left: 6px; }
.tree { flex: 1; list-style: none; margin: 0 -1px 0 0; padding: 0; background: #fdfdfd; border: 1px solid #a4a4a6; border-left: 0; }
.tree li { height: 21px; line-height: 20px; }
.work { flex: 1; min-width: 0; display: flex; flex-direction: column; }
.module { height: 32px; flex: none; display: flex; align-items: center; padding: 0 1px 0 8px; background: linear-gradient(#fff, #ececee); overflow: hidden; }
.module label { width: 52px; flex: none; }
.module .second { width: 45px; margin-left: 14px; }
.combo { display: flex; height: 26px; align-items: center; background: #fff; border: 1px solid #aaa; border-top: 2px solid #777; border-left: 2px solid #777; flex: none; }
.combo select { border: 0; height: 23px; padding-left: 3px; }
.spin { width: 9px; height: 20px; margin-left: 1px; border: 1px solid #bbb; background: #eee url("data:image/svg+xml,%3Csvg xmlns='http://www.w3.org/2000/svg' width='7' height='18'%3E%3Cpath d='M3.500 3l3 3h-6zM3.500 15l3-3h-6z'/%3E%3Cpath d='M0 9h7' stroke='%23bbb'/%3E%3C/svg%3E"); }
.play { margin-left: auto; display: flex; gap: 12px; padding-right: 12px; height: 26px; border-right: 1px solid #999; fill: #2f5486; }
.play button { width: 18px; }

.stage { flex: 1; min-height: 0; display: flex; }
.tools { width: 62px; flex: none; padding: 0 3px 0 2px; background: linear-gradient(90deg, #fff, #efeff0 60%); }
.tools > div { border-top: 1px solid #a4a4a8; padding: 5px 0 1px 1px; display: grid; grid-template-columns: 28px 28px; grid-auto-rows: 28px; align-items: center; justify-items: center; }
.tools button { width: 26px; height: 26px; }
.tools svg { width: 24px; height: 24px; overflow: visible; }
.viewport { flex: 1; min-width: 0; position: relative; overflow: hidden; border-left: 1px solid #4a566a; border-top: 1px solid #4a566a; background: linear-gradient(#1b2c46, #34445f 60%, #a3b1cb); color: #fff; font: 11px/11px "DejaVu Sans", sans-serif; }
.legend { position: absolute; left: 28px; top: 14px; width: 122px; height: 161px; border: 1px solid #e8ecf2; padding: 12px 0 0 9px; }
.lt { line-height: 11px; height: 12px; }
.lb { display: flex; margin-top: 0; }
.sw { width: 19px; margin-top: 5px; height: 121px; border-top: 1px solid #e8ecf2; flex: none; }
.sw i { display: block; height: 10px; width: 16px; border: 1px solid #e8ecf2; border-top: 0; position: relative; }
.sw i::after { content: ""; position: absolute; left: 14px; bottom: -1px; width: 5px; height: 1px; background: #e8ecf2; }
.lb ol { list-style: none; margin: 1px 0 0 6px; padding: 0; }
.lb li { height: 10px; line-height: 10px; }
.c1 { background: #f00; } .c2 { background: #ff5d00; } .c3 { background: #ffb900; } .c4 { background: #e8ff00; }
.c5 { background: #8bff00; } .c6 { background: #2eff00; } .c7 { background: #00ff2e; } .c8 { background: #00ff8b; }
.c9 { background: #00ffe8; } .c10 { background: #00b9ff; } .c11 { background: #005dff; } .c12 { background: #00f; }
.beam { position: absolute; left: 329px; top: 292px; }
.mouse { position: absolute; left: 780px; top: 306px; }
.compass { position: absolute; right: 0; top: 32px; }
.ct { font: 10px "DejaVu Sans", sans-serif; fill: #e6e67a; }
.axes { position: absolute; left: 75px; bottom: 14px; }
.at { font: 12px "DejaVu Sans", sans-serif; fill: #fff; }
.info { position: absolute; left: 187px; bottom: 43px; }
.info p { margin: 0; white-space: pre; }
.info .gap { margin-top: 37px; }
.strip { height: 33px; flex: none; margin-bottom: 5px; background: linear-gradient(#fff, #eeedef); }
.messages { height: 123px; flex: none; background: #fdfdfd; border-top: 1px solid #a8a8a8; border-bottom: 1px solid #a8a8a8; margin-bottom: 3px; }
.taskbar { height: 7px; flex: none; background: #0a0a0a; }
.taskbar i { display: block; width: 48px; height: 7px; margin-left: 421px; background: #3c3c3c; }

.float { position: absolute; top: 0; right: 0; width: 340px; height: 40px; display: flex; align-items: center; padding-left: 4px; background: #f3f5fd; }
.float button { width: 28px; height: 28px; }
.float svg { width: 15px; height: 15px; fill: none; stroke: #22252e; stroke-width: 1.200; overflow: visible; }
.float i { width: 1px; height: 17px; margin: 0 6px; background: #b8bcc6; }
.float .sp { margin-left: 11px; }
.float .mic { margin-left: 5px; }
.float .mic svg { height: 18px; }
```

FILE: beam.js
```js
// Draws the deformed I-beam: back flange, web and front flange, as banded quads.
const A = [[740,508],[770,506],[800,504],[820,504],[862,506],[900,510],[950,516],[1000,523],[1027,526],[1050,527],[1083,526],[1117,523],[1150,517],[1180,510],[1210,501],[1250,487],[1283,476],[1320,461],[1354,446]];
const B = [[735,526],[800,523],[820,524],[853,525],[883,528],[920,532],[960,537],[1000,541],[1050,544],[1117,540],[1180,528],[1217,516],[1260,501],[1300,486],[1330,472],[1349,461]];
const C = [[757,535],[800,531],[837,532],[870,533],[920,536],[960,541],[1000,545],[1050,549],[1100,549],[1150,545],[1183,538],[1217,527],[1250,517],[1283,507],[1317,493],[1350,479],[1375,467]];
const D = [[746,571],[780,568],[820,566],[853,566],[900,569],[950,575],[1000,580],[1027,581],[1060,581],[1083,580],[1117,577],[1150,572],[1190,562],[1220,551],[1250,541],[1283,528],[1320,512],[1350,501],[1370,493]];
const pal = [[0,0,255],[0,93,255],[0,185,255],[0,255,232],[0,255,139],[0,255,46],[46,255,0],[139,255,0],[232,255,0],[255,185,0],[255,93,0],[255,0,0]];
const N = 84;

function at(curve, t) {
  const x = curve[0][0] + (curve[curve.length - 1][0] - curve[0][0]) * t;
  let i = 1;
  while (i < curve.length - 1 && curve[i][0] < x) i++;
  // Catmull-Rom through the neighbouring samples
  const p1 = curve[i - 1], p2 = curve[i], p0 = curve[i - 2] || p1, p3 = curve[i + 1] || p2;
  const h = p2[0] - p1[0], u = (x - p1[0]) / h;
  const m1 = (p2[1] - p0[1]) / (p2[0] - p0[0]) * h, m2 = (p3[1] - p1[1]) / (p3[0] - p1[0]) * h;
  const u2 = u * u, u3 = u2 * u;
  return [x, (2*u3 - 3*u2 + 1) * p1[1] + (u3 - 2*u2 + u) * m1 + (3*u2 - 2*u3) * p2[1] + (u3 - u2) * m2];
}
const mix = (p, q, s) => [p[0] + (q[0] - p[0]) * s, p[1] + (q[1] - p[1]) * s];

function band(x, up, down) {
  let n = 0;
  for (const b of up) if (x > b) n++;
  for (const b of down) if (x > b) n--;
  return Math.max(0, Math.min(11, n));
}
function strip(top, bottom, rows, up, down, shade, lift) {
  let out = "";
  for (let c = 0; c < N; c++) for (let r = 0; r < rows; r++) {
    const t0 = c / N, t1 = (c + 1) / N, s0 = r / rows, s1 = (r + 1) / rows;
    const q = [mix(top(t0), bottom(t0), s0), mix(top(t1), bottom(t1), s0), mix(top(t1), bottom(t1), s1), mix(top(t0), bottom(t0), s1)];
    const x = mix(top((t0 + t1) / 2), bottom((t0 + t1) / 2), 0.5)[0];
    const n = band(x, up, down);
    const k = n === 0 || n === 11 ? 0 : lift;
    const f = shade(x);
    const col = pal[n].map(v => Math.round(v * f + k));
    out += `<path d="M${q.map(p => p.map(v => v.toFixed(1)).join(" ")).join("L")}z" fill="rgb(${col})"/>`;
  }
  return out;
}
const a = t => at(A, t), b = t => at(B, t), c = t => at(C, t), d = t => at(D, t);
const w = t => mix(c(t), d(t), 0.5);
const e = t => { const p = a(t), q = b(t); return [2*q[0] - p[0] - 2*(1 - t), 2*q[1] - p[1] - 1]; };
const up1 = [820,853,883,898,912,930,964,984,1003,1028,1046], dn1 = [1179,1208,1228,1245,1260,1278,1293,1306,1320,1332,1344];
const up2 = [830,865,895,913,931,950,984,1000,1018,1036,1069], dn2 = [1193,1220,1238,1254,1270,1284,1298,1312,1326,1342,1357];
const flat = () => 0.55;
// The web turns toward the light along the right half of the beam
const webShade = x => x < 1000 ? 0.75 : Math.min(0.92, 0.75 + (x - 1000) / 600);
document.getElementById("beam").innerHTML =
  '<g stroke="#041018" stroke-opacity=".75" stroke-width=".8">' +
  strip(b, e, 2, up1, dn1, flat, 10) +
  strip(a, b, 2, up1, dn1, flat, 26) +
  strip(b, w, 4, up1, dn1, webShade, 18) +
  strip(c, d, 4, up2, dn2, flat, 26) + "</g>";
```
